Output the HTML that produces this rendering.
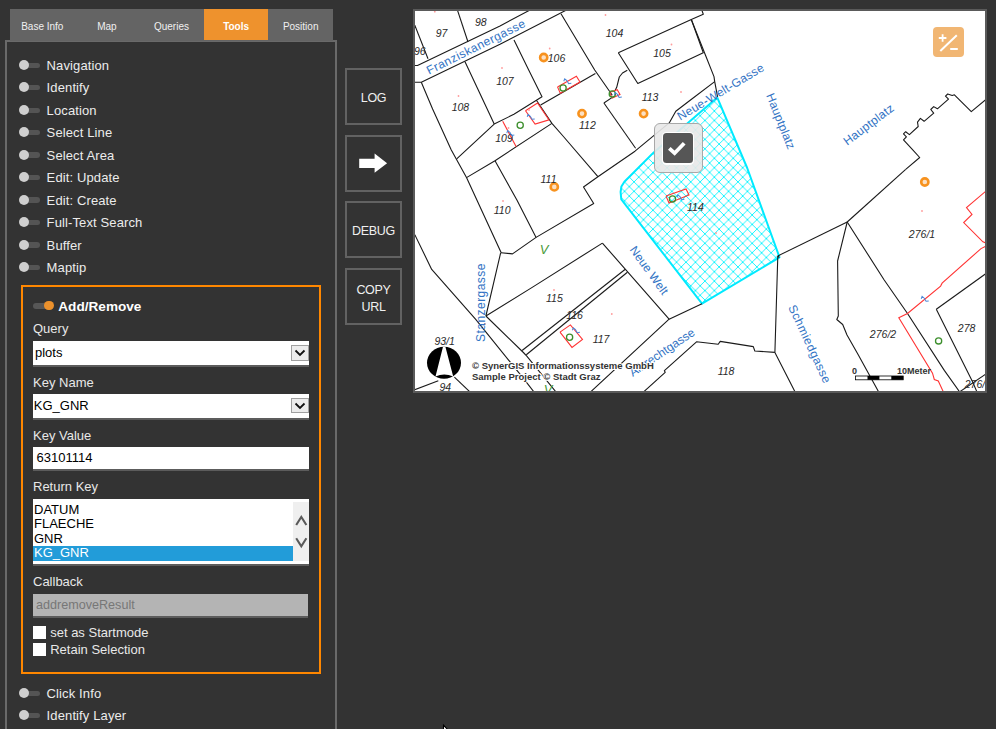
<!DOCTYPE html>
<html><head><meta charset="utf-8">
<style>
*{box-sizing:border-box;margin:0;padding:0}
html,body{width:996px;height:729px;overflow:hidden;background:#333333;font-family:"Liberation Sans",sans-serif;color:#ececec;position:relative}
.abs{position:absolute}
.tabs{position:absolute;left:10px;top:9px;width:323px;height:32px;background:#646464;z-index:2}
.tab{position:absolute;top:0;height:31px;width:64.6px;text-align:center;font-size:10px;line-height:35px;color:#f0f0f0}
.tab.act{background:#ee922d;color:#fff;font-weight:bold}
.panel{position:absolute;left:5px;top:40px;width:332px;height:720px;border:2px solid #6a6a6a;border-bottom:none}
.row{position:absolute;left:0;height:20px;width:300px}
.tg{position:absolute;left:19px;width:21px;height:10px}
.tg .tr{position:absolute;left:6px;top:2.2px;width:15px;height:5.6px;border-radius:3px;background:#545454}
.tg .kn{position:absolute;left:-0.5px;top:-0.25px;width:10px;height:10px;border-radius:50%;background:#cfcfcf}
.lbl{position:absolute;left:46.6px;font-size:13px;letter-spacing:0.12px;white-space:nowrap;color:#ececec}
.box{position:absolute;left:21px;top:285px;width:300px;height:389px;border:2px solid #ff8700}
.flbl{position:absolute;left:33px;font-size:13px;color:#e8e8e8;white-space:nowrap}
.inp{position:absolute;left:33px;width:276px;background:#fff;border-bottom:2px solid #5c5c5c;color:#000;font-size:13px;white-space:nowrap}
.dd{position:absolute;left:291px;width:17.5px;height:15.5px;background:#ececec;border:1px solid #a0a0a0}
.btn{position:absolute;left:345px;width:57px;height:57px;border:2px solid #626262;color:#f0f0f0;font-size:12.5px;letter-spacing:-0.3px;text-align:center}
.cb{position:absolute;left:33px;width:12.5px;height:13px;background:#fff}
.map{position:absolute;left:413px;top:9px;width:574px;height:384px;border:2px solid #5a5a5a;background:#fff;overflow:hidden}
</style></head><body>

<div class="panel"></div>
<div class="tabs">
  <div class="tab" style="left:0">Base Info</div>
  <div class="tab" style="left:64.6px">Map</div>
  <div class="tab" style="left:129.2px">Queries</div>
  <div class="tab act" style="left:193.8px">Tools</div>
  <div class="tab" style="left:258.4px">Position</div>
</div>

<!-- toggles -->
<div class="tg" style="top:60.55px"><div class="tr"></div><div class="kn"></div></div>
<div class="lbl" style="top:58px;line-height:15px">Navigation</div>
<div class="tg" style="top:82.65px"><div class="tr"></div><div class="kn"></div></div>
<div class="lbl" style="top:80px;line-height:15px">Identify</div>
<div class="tg" style="top:105.45px"><div class="tr"></div><div class="kn"></div></div>
<div class="lbl" style="top:103px;line-height:15px">Location</div>
<div class="tg" style="top:127.45px"><div class="tr"></div><div class="kn"></div></div>
<div class="lbl" style="top:125px;line-height:15px">Select Line</div>
<div class="tg" style="top:150.25px"><div class="tr"></div><div class="kn"></div></div>
<div class="lbl" style="top:148px;line-height:15px">Select Area</div>
<div class="tg" style="top:172.45px"><div class="tr"></div><div class="kn"></div></div>
<div class="lbl" style="top:170px;line-height:15px">Edit: Update</div>
<div class="tg" style="top:195.25px"><div class="tr"></div><div class="kn"></div></div>
<div class="lbl" style="top:193px;line-height:15px">Edit: Create</div>
<div class="tg" style="top:217.45px"><div class="tr"></div><div class="kn"></div></div>
<div class="lbl" style="top:215px;line-height:15px">Full-Text Search</div>
<div class="tg" style="top:240.25px"><div class="tr"></div><div class="kn"></div></div>
<div class="lbl" style="top:238px;line-height:15px">Buffer</div>
<div class="tg" style="top:262.45px"><div class="tr"></div><div class="kn"></div></div>
<div class="lbl" style="top:260px;line-height:15px">Maptip</div>
<div class="tg" style="top:688.55px"><div class="tr"></div><div class="kn"></div></div>
<div class="lbl" style="top:686px;line-height:15px">Click Info</div>
<div class="tg" style="top:710.65px"><div class="tr"></div><div class="kn"></div></div>
<div class="lbl" style="top:708px;line-height:15px">Identify Layer</div>


<!-- form box -->
<div class="box"></div>
<div class="abs" style="left:33px;top:303px;width:17px;height:5.6px;border-radius:3px;background:#575757"></div>
<div class="abs" style="left:44.2px;top:300.8px;width:9.7px;height:9.7px;border-radius:50%;background:#eb912c"></div>
<div class="abs" style="left:58.3px;top:299px;line-height:15px;font-size:13.6px;font-weight:bold;color:#fff;white-space:nowrap">Add/Remove</div>

<div class="flbl" style="top:321px;line-height:15px">Query</div>
<div class="inp" style="top:341px;height:26px;line-height:24px;padding-left:2px">plots</div>
<div class="dd" style="top:345px"><svg width="16" height="14" style="position:absolute;left:0;top:0"><path d="M3.5,4.5 L8,9 L12.5,4.5" stroke="#111" stroke-width="1.8" fill="none"/></svg></div>

<div class="flbl" style="top:374.5px;line-height:15px">Key Name</div>
<div class="inp" style="top:393.7px;height:26.3px;line-height:24px;padding-left:0.8px">KG_GNR</div>
<div class="dd" style="top:397.7px"><svg width="16" height="14" style="position:absolute;left:0;top:0"><path d="M3.5,4.5 L8,9 L12.5,4.5" stroke="#111" stroke-width="1.8" fill="none"/></svg></div>

<div class="flbl" style="top:427.8px;line-height:15px">Key Value</div>
<div class="inp" style="top:446.8px;height:24.2px;line-height:22.4px;padding-left:3.5px">63101114</div>

<div class="flbl" style="top:479.4px;line-height:15px">Return Key</div>
<div class="inp" style="top:499px;height:66.7px;">
  <div class="abs" style="left:0;top:47px;width:260px;height:14.5px;background:#229cd9"></div>
  <div class="abs" style="left:1px;top:3.5px;line-height:14.6px;color:#000">DATUM<br>FLAECHE<br>GNR<br><span style="color:#fff">KG_GNR</span></div>
  <div class="abs" style="left:260px;top:3px;width:16px;height:59px;background:#efefef">
    <svg width="16" height="59" style="position:absolute;left:0;top:0"><path d="M3.2,23 L8.3,15 L13.4,23" stroke="#5a5a5a" stroke-width="2.1" fill="none"/><path d="M3.2,36.2 L8.3,44.2 L13.4,36.2" stroke="#5a5a5a" stroke-width="2.1" fill="none"/></svg>
  </div>
</div>

<div class="flbl" style="top:573.9px;line-height:15px">Callback</div>
<div class="inp" style="top:594px;height:24px;width:275px;background:#b4b4b4;line-height:22px;padding-left:3px;color:#777;font-size:12.6px">addremoveResult</div>

<div class="cb" style="top:625.5px"></div>
<div class="flbl" style="left:50.2px;top:625.2px;line-height:15px">set as Startmode</div>
<div class="cb" style="top:642.5px"></div>
<div class="flbl" style="left:50.2px;top:642.3px;line-height:15px">Retain Selection</div>

<!-- buttons -->
<div class="btn" style="top:68px;line-height:57px">LOG</div>
<div class="btn" style="top:134.7px"><svg width="53" height="53" style="position:absolute;left:0;top:0"><path d="M12.2,21.8 H27.6 V16.6 L40.1,26.2 L27.6,35.8 V31 H12.2 Z" fill="#fff"/></svg></div>
<div class="btn" style="top:201.3px;line-height:57px">DEBUG</div>
<div class="btn" style="top:268px;line-height:17px;padding-top:11.5px">COPY<br>URL</div>

<div class="map" id="map"><svg width="570" height="380" viewBox="415 11 570 380" style="position:absolute;left:0;top:0">
<defs><pattern id="hx" patternUnits="userSpaceOnUse" x="704.9" y="186.6" width="9.45" height="9.45"><path d="M-1,-1 L10.45,10.45 M10.45,-1 L-1,10.45" stroke="#14f4ff" stroke-width="1.1" fill="none" shape-rendering="crispEdges"/></pattern></defs>
<polygon points="717.3,97.6 747.2,168.0 779.5,257.3 702.0,303.7 621.3,199.3 620.6,192.0 621.4,186.5 624.4,181.7 653.2,152.9" fill="url(#hx)" stroke="#00eaff" stroke-width="2" stroke-linejoin="round"/>
<polyline points="414.0,65.5 417.5,65.5 500.0,25.9 530.0,10.0" fill="none" stroke="#1a1a1a" stroke-width="1.1" stroke-linejoin="round"/>
<polyline points="414.0,82.3 421.3,82.3 500.0,44.3 566.5,10.0" fill="none" stroke="#1a1a1a" stroke-width="1.1" stroke-linejoin="round"/>
<polyline points="414.0,23.3 428.0,58.7" fill="none" stroke="#1a1a1a" stroke-width="1.1" stroke-linejoin="round"/>
<polyline points="457.4,10.0 468.0,42.0" fill="none" stroke="#1a1a1a" stroke-width="1.1" stroke-linejoin="round"/>
<polyline points="421.3,82.3 432.6,109.0 451.3,150.0 466.5,177.6 501.2,252.7 500.5,253.5 485.9,316.0" fill="none" stroke="#1a1a1a" stroke-width="1.1" stroke-linejoin="round"/>
<polyline points="465.0,61.7 490.0,115.0 494.2,124.1" fill="none" stroke="#1a1a1a" stroke-width="1.1" stroke-linejoin="round"/>
<polyline points="514.0,39.9 528.7,70.0 542.0,96.7 536.4,100.2 513.9,114.3 494.2,124.1 456.7,158.9" fill="none" stroke="#1a1a1a" stroke-width="1.1" stroke-linejoin="round"/>
<polyline points="536.4,100.2 551.9,123.4 563.0,136.0 597.9,176.7" fill="none" stroke="#1a1a1a" stroke-width="1.1" stroke-linejoin="round"/>
<polyline points="466.5,177.6 495.0,160.7 551.9,123.4" fill="none" stroke="#1a1a1a" stroke-width="1.1" stroke-linejoin="round"/>
<polyline points="495.0,160.7 516.9,200.0 536.1,237.4" fill="none" stroke="#1a1a1a" stroke-width="1.1" stroke-linejoin="round"/>
<polyline points="501.2,252.7 512.5,253.9 536.1,237.4 593.7,203.5 583.5,187.0 597.9,176.7 635.0,151.2 669.5,122.6 675.8,111.2 690.5,100.0 714.7,81.6" fill="none" stroke="#1a1a1a" stroke-width="1.1" stroke-linejoin="round"/>
<polyline points="603.9,103.0 635.6,148.2" fill="none" stroke="#1a1a1a" stroke-width="1.1" stroke-linejoin="round"/>
<polyline points="603.9,103.0 612.3,97.4" fill="none" stroke="#1a1a1a" stroke-width="1.1" stroke-linejoin="round"/>
<polyline points="561.0,13.8 594.7,70.0 612.3,95.3" fill="none" stroke="#1a1a1a" stroke-width="1.1" stroke-linejoin="round"/>
<polyline points="540.6,105.1 595.4,73.5" fill="none" stroke="#1a1a1a" stroke-width="1.1" stroke-linejoin="round"/>
<polyline points="618.3,52.7 691.3,19.5 703.3,52.7 637.8,83.5 618.3,52.7" fill="none" stroke="#1a1a1a" stroke-width="1.1" stroke-linejoin="round"/>
<polyline points="691.3,19.5 703.3,14.3 701.8,10.0" fill="none" stroke="#1a1a1a" stroke-width="1.1" stroke-linejoin="round"/>
<polyline points="691.3,19.5 705.4,55.0 714.0,76.6 714.7,81.6 717.6,96.8" fill="none" stroke="#1a1a1a" stroke-width="1.1" stroke-linejoin="round"/>
<polyline points="615.2,90.3 616.7,87.3 619.3,77.0 622.5,73.0 627.3,70.3" fill="none" stroke="#1a1a1a" stroke-width="1.1" stroke-linejoin="round"/>
<polyline points="905.7,169.3 919.7,157.5 912.3,149.4 903.5,139.8 906.4,136.8 903.5,133.9 905.7,131.7 909.4,134.6 918.2,126.5 917.5,122.1 920.4,118.4 924.1,121.3 933.7,113.2 930.8,109.5 933.7,106.6 937.4,108.8 948.5,99.2 945.5,96.2 947.7,94.0 952.2,95.5 954.4,94.8 971.3,111.7 986.0,99.5" fill="none" stroke="#1a1a1a" stroke-width="1.1" stroke-linejoin="round"/>
<polyline points="847.2,222.0 905.7,169.3" fill="none" stroke="#1a1a1a" stroke-width="1.1" stroke-linejoin="round"/>
<polyline points="777.8,255.9 847.2,222.0" fill="none" stroke="#1a1a1a" stroke-width="1.1" stroke-linejoin="round"/>
<polyline points="847.2,222.0 837.6,261.0 838.3,316.0 836.8,319.5 842.7,324.5 847.0,335.0 858.5,355.3 878.7,392.0" fill="none" stroke="#1a1a1a" stroke-width="1.1" stroke-linejoin="round"/>
<polyline points="847.2,222.0 884.2,280.0 907.5,313.5 944.3,370.4 959.7,392.0" fill="none" stroke="#1a1a1a" stroke-width="1.1" stroke-linejoin="round"/>
<polyline points="936.3,309.2 986.0,273.5" fill="none" stroke="#1a1a1a" stroke-width="1.1" stroke-linejoin="round"/>
<polyline points="936.3,309.2 972.3,381.2 977.0,392.0" fill="none" stroke="#1a1a1a" stroke-width="1.1" stroke-linejoin="round"/>
<polyline points="959.4,392.0 986.0,374.0" fill="none" stroke="#1a1a1a" stroke-width="1.1" stroke-linejoin="round"/>
<polyline points="777.8,255.9 774.9,352.4 795.1,392.0" fill="none" stroke="#1a1a1a" stroke-width="1.1" stroke-linejoin="round"/>
<polyline points="643.5,392.0 665.2,372.3 664.4,370.7 696.5,341.8 718.2,344.2 720.2,341.4 753.3,346.6 754.8,351.0 774.9,352.4" fill="none" stroke="#1a1a1a" stroke-width="1.1" stroke-linejoin="round"/>
<polyline points="669.1,319.2 702.0,303.7" fill="none" stroke="#1a1a1a" stroke-width="1.1" stroke-linejoin="round"/>
<polyline points="602.4,243.1 669.1,319.2 590.5,392.0" fill="none" stroke="#1a1a1a" stroke-width="1.1" stroke-linejoin="round"/>
<polyline points="485.9,316.0 533.0,286.9 602.4,243.1" fill="none" stroke="#1a1a1a" stroke-width="1.1" stroke-linejoin="round"/>
<polyline points="485.9,316.0 523.4,352.5 526.8,356.1 556.0,392.0" fill="none" stroke="#1a1a1a" stroke-width="1.1" stroke-linejoin="round"/>
<polyline points="522.1,350.5 625.3,269.2" fill="none" stroke="#1a1a1a" stroke-width="1.1" stroke-linejoin="round"/>
<polyline points="526.3,354.7 627.4,272.3" fill="none" stroke="#1a1a1a" stroke-width="1.1" stroke-linejoin="round"/>
<polyline points="414.8,234.7 431.7,269.4 475.5,319.2 510.9,362.9 523.4,378.3 534.0,392.0" fill="none" stroke="#1a1a1a" stroke-width="1.1" stroke-linejoin="round"/>
<polyline points="414.0,390.0 438.3,380.7" fill="none" stroke="#1a1a1a" stroke-width="1.1" stroke-linejoin="round"/>
<polyline points="454.4,377.2 470.0,392.0" fill="none" stroke="#1a1a1a" stroke-width="1.1" stroke-linejoin="round"/>
<polyline points="777.8,255.9 779.3,257.6" fill="none" stroke="#1a1a1a" stroke-width="1.1" stroke-linejoin="round"/>
<polyline points="557.5,86.9 576.4,76.3 580.0,82.0 560.3,93.2 557.5,86.9" fill="none" stroke="#ff3333" stroke-width="1.1"/>
<polyline points="525.5,110.8 537.5,103.0 549.0,119.9 535.1,124.1 525.5,110.8" fill="none" stroke="#ff3333" stroke-width="1.1"/>
<polyline points="609.5,92.5 617.2,89.7 620.0,94.6 612.3,98.1 609.5,92.5" fill="none" stroke="#ff3333" stroke-width="1.1"/>
<polyline points="502.7,121.3 516.2,146.7" fill="none" stroke="#ff3333" stroke-width="1.1"/>
<polyline points="560.0,332.1 570.4,324.9 582.5,339.4 572.0,347.4 560.0,332.1" fill="none" stroke="#ff3333" stroke-width="1.1"/>
<polyline points="666.0,196.0 686.0,189.0 689.0,195.0 669.0,203.0 666.0,196.0" fill="none" stroke="#ff3333" stroke-width="1.1"/>
<polyline points="986.0,191.0 966.5,207.5 972.0,214.4 963.7,222.6 982.9,241.8 986.0,243.0" fill="none" stroke="#ff3333" stroke-width="1.1"/>
<polyline points="986.0,246.0 981.0,248.6 942.1,283.2 940.6,286.1 907.5,313.5 898.8,317.8 932.5,373.2 934.3,379.5 938.3,381.0 943.4,392.0" fill="none" stroke="#ff3333" stroke-width="1.1"/>
<circle cx="434.8" cy="11.7" r="0.9" fill="#ff9c9c"/>
<circle cx="549.7" cy="48.5" r="0.9" fill="#ff9c9c"/>
<circle cx="502" cy="68" r="0.9" fill="#ff9c9c"/>
<circle cx="458.5" cy="96" r="0.9" fill="#ff9c9c"/>
<circle cx="605.5" cy="15" r="0.9" fill="#ff9c9c"/>
<circle cx="671.5" cy="44.5" r="0.9" fill="#ff9c9c"/>
<circle cx="681" cy="92" r="0.9" fill="#ff9c9c"/>
<circle cx="508.5" cy="128" r="0.9" fill="#ff9c9c"/>
<circle cx="529" cy="110" r="0.9" fill="#ff9c9c"/>
<circle cx="503" cy="201" r="0.9" fill="#ff9c9c"/>
<circle cx="554" cy="290" r="0.9" fill="#ff9c9c"/>
<circle cx="611.8" cy="314" r="0.9" fill="#ff9c9c"/>
<circle cx="716" cy="233" r="0.9" fill="#ff9c9c"/>
<circle cx="922" cy="211" r="0.9" fill="#ff9c9c"/>
<circle cx="485" cy="324" r="0.9" fill="#ff9c9c"/>
<circle cx="543.7" cy="57.5" r="3.6" fill="#fbe0c4" stroke="#f7921e" stroke-width="2.6"/>
<circle cx="554.3" cy="186.9" r="3.6" fill="#fbe0c4" stroke="#f7921e" stroke-width="2.6"/>
<circle cx="582" cy="113.6" r="3.6" fill="#fbe0c4" stroke="#f7921e" stroke-width="2.6"/>
<circle cx="643.6" cy="113.6" r="3.6" fill="#fbe0c4" stroke="#f7921e" stroke-width="2.6"/>
<circle cx="924.8" cy="182" r="3.6" fill="#fbe0c4" stroke="#f7921e" stroke-width="2.6"/>
<circle cx="563.1" cy="88" r="3.1" fill="none" stroke="#3d8f2d" stroke-width="1.3"/>
<circle cx="520.2" cy="125.2" r="3.1" fill="none" stroke="#3d8f2d" stroke-width="1.3"/>
<circle cx="612.3" cy="93.9" r="3.1" fill="none" stroke="#3d8f2d" stroke-width="1.3"/>
<circle cx="569.6" cy="337.3" r="3.1" fill="none" stroke="#3d8f2d" stroke-width="1.3"/>
<circle cx="938.6" cy="340.9" r="3.1" fill="none" stroke="#3d8f2d" stroke-width="1.3"/>
<circle cx="672.5" cy="199" r="3.1" fill="none" stroke="#3d8f2d" stroke-width="1.3"/>
<text x="441.6" y="37.3" text-anchor="middle" font-family="Liberation Sans" font-style="italic" font-size="10.5" fill="#2a2a2a">97</text>
<text x="480.8" y="26.1" text-anchor="middle" font-family="Liberation Sans" font-style="italic" font-size="10.5" fill="#2a2a2a">98</text>
<text x="419.8" y="54.699999999999996" text-anchor="middle" font-family="Liberation Sans" font-style="italic" font-size="10.5" fill="#2a2a2a">96</text>
<text x="504.9" y="84.8" text-anchor="middle" font-family="Liberation Sans" font-style="italic" font-size="10.5" fill="#2a2a2a">107</text>
<text x="460.4" y="111.1" text-anchor="middle" font-family="Liberation Sans" font-style="italic" font-size="10.5" fill="#2a2a2a">108</text>
<text x="556.5" y="62.3" text-anchor="middle" font-family="Liberation Sans" font-style="italic" font-size="10.5" fill="#2a2a2a">106</text>
<text x="614.5" y="36.599999999999994" text-anchor="middle" font-family="Liberation Sans" font-style="italic" font-size="10.5" fill="#2a2a2a">104</text>
<text x="662" y="57.0" text-anchor="middle" font-family="Liberation Sans" font-style="italic" font-size="10.5" fill="#2a2a2a">105</text>
<text x="650" y="101.3" text-anchor="middle" font-family="Liberation Sans" font-style="italic" font-size="10.5" fill="#2a2a2a">113</text>
<text x="504" y="142.0" text-anchor="middle" font-family="Liberation Sans" font-style="italic" font-size="10.5" fill="#2a2a2a">109</text>
<text x="548.5" y="183.10000000000002" text-anchor="middle" font-family="Liberation Sans" font-style="italic" font-size="10.5" fill="#2a2a2a">111</text>
<text x="587.4" y="129.1" text-anchor="middle" font-family="Liberation Sans" font-style="italic" font-size="10.5" fill="#2a2a2a">112</text>
<text x="502.2" y="214.0" text-anchor="middle" font-family="Liberation Sans" font-style="italic" font-size="10.5" fill="#2a2a2a">110</text>
<text x="695.4" y="210.9" text-anchor="middle" font-family="Liberation Sans" font-style="italic" font-size="10.5" fill="#2a2a2a">114</text>
<text x="554.4" y="302.3" text-anchor="middle" font-family="Liberation Sans" font-style="italic" font-size="10.5" fill="#2a2a2a">115</text>
<text x="574.5" y="318.8" text-anchor="middle" font-family="Liberation Sans" font-style="italic" font-size="10.5" fill="#2a2a2a">116</text>
<text x="601" y="342.90000000000003" text-anchor="middle" font-family="Liberation Sans" font-style="italic" font-size="10.5" fill="#2a2a2a">117</text>
<text x="726" y="374.6" text-anchor="middle" font-family="Liberation Sans" font-style="italic" font-size="10.5" fill="#2a2a2a">118</text>
<text x="922" y="238.4" text-anchor="middle" font-family="Liberation Sans" font-style="italic" font-size="10.5" fill="#2a2a2a">276/1</text>
<text x="883" y="338.0" text-anchor="middle" font-family="Liberation Sans" font-style="italic" font-size="10.5" fill="#2a2a2a">276/2</text>
<text x="966.6" y="332.2" text-anchor="middle" font-family="Liberation Sans" font-style="italic" font-size="10.5" fill="#2a2a2a">278</text>
<text x="975" y="388.3" text-anchor="middle" font-family="Liberation Sans" font-style="italic" font-size="10.5" fill="#2a2a2a">276/</text>
<text x="444.6" y="344.90000000000003" text-anchor="middle" font-family="Liberation Sans" font-style="italic" font-size="10.5" fill="#2a2a2a">93/1</text>
<text x="445.3" y="390.6" text-anchor="middle" font-family="Liberation Sans" font-style="italic" font-size="10.5" fill="#2a2a2a">94</text>
<text x="0" y="4.3" transform="translate(475.9,46.6) rotate(-26.5)" text-anchor="middle" font-family="Liberation Sans" font-size="12" letter-spacing="0.45" fill="#3273c4">Franziskanergasse</text>
<text x="0" y="4.3" transform="translate(720.5,91.7) rotate(-31)" text-anchor="middle" font-family="Liberation Sans" font-size="12" letter-spacing="0.25" fill="#3273c4">Neue-Welt-Gasse</text>
<text x="0" y="4.3" transform="translate(781,121.2) rotate(68)" text-anchor="middle" font-family="Liberation Sans" font-size="12" letter-spacing="0.2" fill="#3273c4">Hauptplatz</text>
<text x="0" y="4.3" transform="translate(868.5,124.3) rotate(-37)" text-anchor="middle" font-family="Liberation Sans" font-size="12" letter-spacing="0.25" fill="#3273c4">Hauptplatz</text>
<text x="0" y="4.3" transform="translate(649.3,270.2) rotate(54)" text-anchor="middle" font-family="Liberation Sans" font-size="12" letter-spacing="0.1" fill="#3273c4">Neue Welt</text>
<text x="0" y="4.3" transform="translate(661.8,352.1) rotate(-34)" text-anchor="middle" font-family="Liberation Sans" font-size="12" letter-spacing="0" fill="#3273c4">Albrechtgasse</text>
<text x="0" y="4.3" transform="translate(480.7,302.5) rotate(-90)" text-anchor="middle" font-family="Liberation Sans" font-size="12" letter-spacing="0.45" fill="#3273c4">Stanzergasse</text>
<text x="0" y="4.3" transform="translate(810,344) rotate(65)" text-anchor="middle" font-family="Liberation Sans" font-size="12" letter-spacing="0.55" fill="#3273c4">Schmiedgasse</text>
<text x="544" y="254" text-anchor="middle" font-family="Liberation Sans" font-style="italic" font-size="13" fill="#4a9a3a">V</text>
<text x="548" y="394" text-anchor="middle" font-family="Liberation Sans" font-style="italic" font-size="13" fill="#4a9a3a">V</text>
<ellipse cx="444" cy="362.8" rx="17" ry="16" fill="#000"/>
<path d="M443,346.8 L445.4,346.8 L453.2,376.6 Q444.2,372.2 435.5,376.6 Z" fill="#fff"/>
<text x="472" y="368.8" font-family="Liberation Sans" font-weight="bold" font-size="9.5" fill="#333" stroke="#fff" stroke-width="2" paint-order="stroke">© SynerGIS Informationssysteme GmbH</text>
<text x="472" y="380.4" font-family="Liberation Sans" font-weight="bold" font-size="9.5" fill="#333" stroke="#fff" stroke-width="2" paint-order="stroke">Sample Project © Stadt Graz</text>
<text x="852" y="373.5" font-family="Liberation Sans" font-weight="bold" font-size="9" fill="#333">0</text>
<text x="897" y="373.5" font-family="Liberation Sans" font-weight="bold" font-size="9" fill="#333">10Meter</text>
<rect x="855.6" y="376" width="47.6" height="3.8" fill="#fff" stroke="#000" stroke-width="0.8"/>
<rect x="867.5" y="376" width="11.9" height="3.8" fill="#000"/>
<rect x="891.3" y="376" width="11.9" height="3.8" fill="#000"/>
<path transform="translate(567.4,81.5) rotate(-30)" d="M-3,-2 L-1,-3.7 L0,-1 L0,2.5 L2.5,3.5" fill="none" stroke="#4a86d8" stroke-width="1"/>
<path transform="translate(530.8,117.1) rotate(-30)" d="M-3,-2 L-1,-3.7 L0,-1 L0,2.5 L2.5,3.5" fill="none" stroke="#4a86d8" stroke-width="1"/>
<path transform="translate(617.9,95.3) rotate(-30)" d="M-3,-2 L-1,-3.7 L0,-1 L0,2.5 L2.5,3.5" fill="none" stroke="#4a86d8" stroke-width="1"/>
<path transform="translate(576,330.5) rotate(-30)" d="M-3,-2 L-1,-3.7 L0,-1 L0,2.5 L2.5,3.5" fill="none" stroke="#4a86d8" stroke-width="1"/>
<path transform="translate(680.5,197.5) rotate(-30)" d="M-3,-2 L-1,-3.7 L0,-1 L0,2.5 L2.5,3.5" fill="none" stroke="#4a86d8" stroke-width="1"/>
<path transform="translate(924.8,299.1) rotate(-30)" d="M-3,-2 L-1,-3.7 L0,-1 L0,2.5 L2.5,3.5" fill="none" stroke="#4a86d8" stroke-width="1"/>
<path transform="translate(510.4,133.3) rotate(-30)" d="M-3,-2 L-1,-3.7 L0,-1 L0,2.5 L2.5,3.5" fill="none" stroke="#4a86d8" stroke-width="1"/>
</svg>
<div class="abs" style="left:518px;top:16px;width:31px;height:30px;border-radius:4px;background:#f1b673">
 <svg width="31" height="30" style="position:absolute;left:0;top:0"><path d="M9.6,7.2 V14.8 M5.8,11 H13.4" stroke="#fff" stroke-width="1.8"/><path d="M7.3,24 L23.8,8.2" stroke="#fff" stroke-width="2"/><path d="M17.2,22 H24.8" stroke="#fff" stroke-width="2"/></svg>
</div>
<div class="abs" style="left:238.5px;top:112.2px;width:49px;height:49.4px;border-radius:6px;background:rgba(232,232,232,0.9);border:1px solid #a8a8a8"></div>
<div class="abs" style="left:246.8px;top:120.5px;width:32.7px;height:33.5px;border-radius:4.5px;background:#fff"></div>
<div class="abs" style="left:248px;top:121.8px;width:30px;height:30.2px;border-radius:3.5px;background:rgba(72,72,72,0.92)">
 <svg width="30" height="30" style="position:absolute;left:0;top:0"><path d="M6.3,15.4 L11.6,20.2 L21.2,10.2" stroke="#fff" stroke-width="3.8" fill="none"/></svg>
</div>
</div><!--mapend-->

<svg class="abs" style="left:440px;top:722px" width="12" height="7"><path d="M3.5,3.2 V12 L7.8,7.8 Z" fill="#fff" stroke="#000" stroke-width="1.1"/></svg>
</body></html>
